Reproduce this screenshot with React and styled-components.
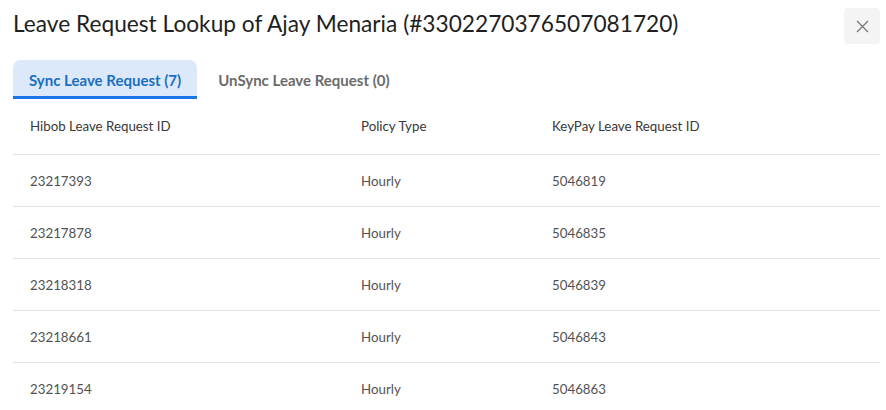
import styled, { createGlobalStyle } from 'styled-components';

const GlobalStyle = createGlobalStyle`
   * {
      box-sizing: border-box;
   }
   body {
      margin: 0;
      background: #ffffff;
      font-family: Lato, 'Noto Sans', sans-serif;
      color: #333333;
   }
`;

const Wrapper = styled.div`
   width: 886px;
   height: 410px;
   overflow: hidden;
   padding: 8px 6px 0 13px;
`;

const Header = styled.div`
   display: flex;
   align-items: flex-start;
   justify-content: space-between;
`;

const Title = styled.h2`
   margin: 0;
   padding-top: 1px;
   font-size: 22.7px;
   font-weight: 400;
   line-height: 30px;
   color: #1f1f1f;
`;

const CloseButton = styled.button`
   width: 36px;
   height: 36px;
   border: none;
   border-radius: 4px;
   background: #f4f4f4;
   display: flex;
   align-items: center;
   justify-content: center;
   cursor: pointer;
   padding: 0;
`;

const Tabs = styled.div`
   display: flex;
   margin-top: 16px;
`;

const Tab = styled.div`
   height: 39px;
   padding: 3px 16px 0;
   display: flex;
   align-items: center;
   font-size: 15px;
   font-weight: 700;
   border-radius: 8px 8px 0 0;
   border-bottom: 3px solid ${(p) => (p.active ? '#1a73e8' : 'transparent')};
   background: ${(p) => (p.active ? '#dce9fb' : 'transparent')};
   color: ${(p) => (p.active ? '#1b6ec2' : '#6b6b6b')};
   ${(p) => !p.active && 'padding-left: 21px;'}
`;

const Table = styled.div`
   width: 867px;
`;

const Row = styled.div`
   display: grid;
   grid-template-columns: 331px 191px 1fr;
   height: ${(p) => (p.head ? '56px' : '52px')};
   align-items: center;
   border-bottom: 1px solid #e2e2e2;
   font-size: 13.3px;
   color: ${(p) => (p.head ? '#383838' : '#525252')};
   ${(p) => p.head && 'padding-bottom: 2px;'}
   > span {
      padding-left: 17px;
   }
`;

const rows = [
   ['23217393', 'Hourly', '5046819'],
   ['23217878', 'Hourly', '5046835'],
   ['23218318', 'Hourly', '5046839'],
   ['23218661', 'Hourly', '5046843'],
   ['23219154', 'Hourly', '5046863'],
];

const App = () => (
   <Wrapper>
      <GlobalStyle />
      <Header>
         <Title>Leave Request Lookup of Ajay Menaria (#3302270376507081720)</Title>
         <CloseButton aria-label="close">
            <svg width="13" height="13" viewBox="0 0 13 13">
               <path d="M1 1L12 12M12 1L1 12" stroke="#777" strokeWidth="1.3" />
            </svg>
         </CloseButton>
      </Header>
      <Tabs>
         <Tab active>Sync Leave Request (7)</Tab>
         <Tab>UnSync Leave Request (0)</Tab>
      </Tabs>
      <Table>
         <Row head>
            <span>Hibob Leave Request ID</span>
            <span>Policy Type</span>
            <span>KeyPay Leave Request ID</span>
         </Row>
         {rows.map((r, i) => (
            <Row key={i}>
               {r.map((c, j) => (
                  <span key={j}>{c}</span>
               ))}
            </Row>
         ))}
      </Table>
   </Wrapper>
);

export default App;
